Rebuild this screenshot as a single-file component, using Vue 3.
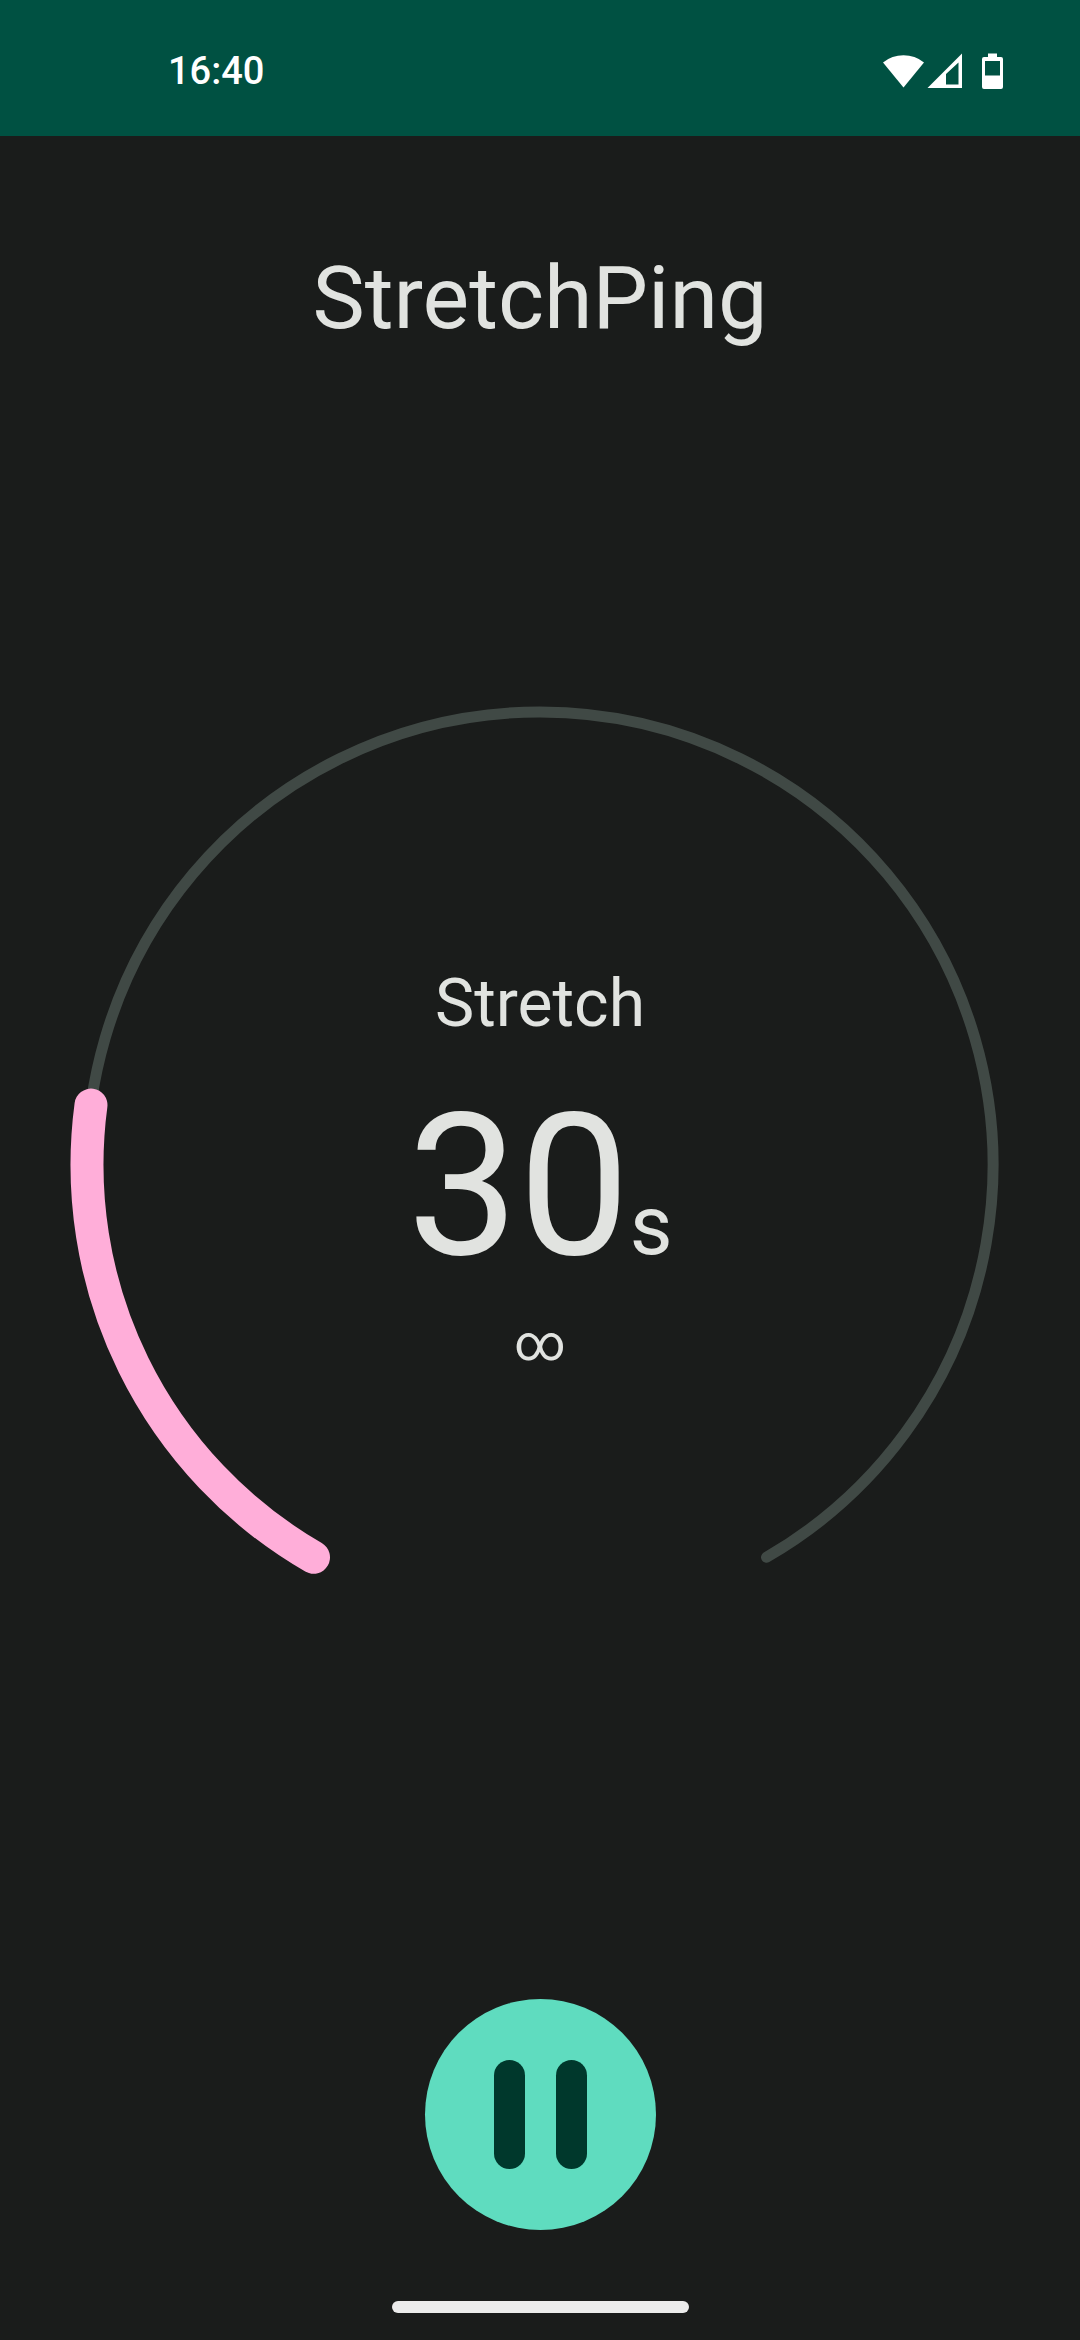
<script setup>
import { computed, ref } from 'vue'

const size = 940
const center = size / 2
const radius = 453
const startAngle = 120
const totalSweep = 300

const time = ref('16:40')
const seconds = ref(30)
const sweep = ref(67.6)

function point(angle) {
  const rad = (angle * Math.PI) / 180
  return `${center + radius * Math.cos(rad)} ${center + radius * Math.sin(rad)}`
}

function arc(degrees) {
  const large = degrees > 180 ? 1 : 0
  return `M${point(startAngle)}A${radius} ${radius} 0 ${large} 1 ${point(startAngle + degrees)}`
}

const trackPath = arc(totalSweep)
const progressPath = computed(() => arc(sweep.value))
</script>

<template>
  <div class="screen">
    <div class="status-bar">
      <time class="clock">{{ time }}</time>
      <svg class="status-icons" width="122" height="36" viewBox="0 0 122 36" fill="#fff" aria-hidden="true">
        <path d="M1 9.500A33 33 0 0 1 42 9.500L21.500 34.500Z" />
        <path fill-rule="evenodd" d="M45.500 35L80 0.500V35ZM64 21V31.500H76.500V9.500Z" />
        <path
          fill-rule="evenodd"
          d="M106 0.500H115V4H119Q121 4 121 6V34Q121 36 119 36H102Q100 36 100 34V6Q100 4 102 4H106ZM103 8V22.500H118V8Z"
        />
      </svg>
    </div>

    <h1 class="title">StretchPing</h1>

    <main class="stage">
      <div class="dial">
        <svg class="ring" :viewBox="`0 0 ${size} ${size}`" aria-hidden="true">
          <path class="track" :d="trackPath" />
          <path class="progress" :d="progressPath" />
        </svg>
        <div class="readout">
          <p class="label">Stretch</p>
          <p class="count">{{ seconds }}<span class="unit">s</span></p>
          <p class="rounds">∞</p>
        </div>
      </div>
    </main>

    <footer class="controls">
      <button class="pause" type="button" aria-label="Pause">
        <span class="bar"></span>
        <span class="bar"></span>
      </button>
      <div class="nav-handle"></div>
    </footer>
  </div>
</template>

<style>
body {
  background: #1a1c1b;
}
</style>

<style scoped>
.screen {
  display: flex;
  flex-direction: column;
  min-height: 100vh;
  background: #1a1c1b;
  color: #e1e3e0;
  font-family: Roboto, 'Liberation Sans', sans-serif;
}

.status-bar {
  display: flex;
  align-items: center;
  justify-content: space-between;
  box-sizing: border-box;
  height: 136px;
  padding: 6px 76px 0 168px;
  background: #005142;
  color: #fff;
}

.clock {
  font-size: 38px;
  font-weight: 500;
  line-height: 44px;
}

.title {
  margin: 110px 0 0;
  font-size: 88px;
  font-weight: 400;
  line-height: 104px;
  text-align: center;
}

.stage {
  display: flex;
  flex: 1;
  align-items: center;
  padding: 0 70px;
}

.dial {
  display: grid;
  flex: 1;
}

.ring,
.readout {
  grid-area: 1 / 1;
}

.ring {
  display: block;
  width: 100%;
}

.ring path {
  fill: none;
  stroke-linecap: round;
}

.track {
  stroke: #404945;
  stroke-width: 11px;
}

.progress {
  stroke: #ffaed9;
  stroke-width: 33px;
}

.readout {
  padding-top: 265px;
  text-align: center;
}

.readout p {
  margin: 0;
}

.label {
  font-size: 66px;
  line-height: 88px;
}

.readout .count {
  margin-top: 22px;
  font-size: 198px;
  line-height: 232px;
}

.unit {
  font-size: 83px;
  line-height: 88px;
}

.readout .rounds {
  margin-top: 8px;
  font-size: 50px;
  line-height: 66px;
}

.controls {
  display: flex;
  flex-direction: column;
  align-items: center;
  padding: 20px 0 27px;
}

.pause {
  display: flex;
  align-items: center;
  justify-content: center;
  gap: 31px;
  width: 231px;
  height: 231px;
  padding: 0;
  border: 0;
  border-radius: 50%;
  background: #5fdcbf;
}

.bar {
  width: 31px;
  height: 109px;
  border-radius: 16px;
  background: #00382c;
}

.nav-handle {
  width: 297px;
  height: 12px;
  margin-top: 71px;
  border-radius: 6px;
  background: #ececec;
}
</style>
